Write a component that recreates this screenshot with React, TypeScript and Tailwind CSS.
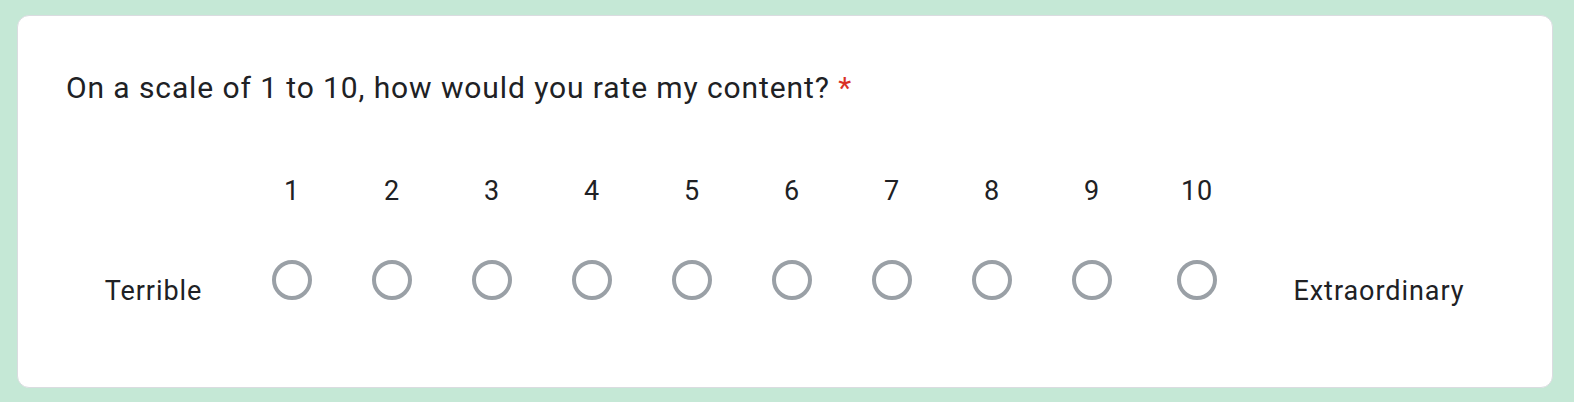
import React from "react";

export default function App() {
  const nums = [1, 2, 3, 4, 5, 6, 7, 8, 9, 10];
  return (
    <div
      className="w-[1574px] h-[402px] bg-[#c5e8d6] pt-[15px] pl-[17px]"
      style={{ fontFamily: "Roboto, 'Noto Sans', Arial, sans-serif" }}
    >
      <div className="w-[1536px] h-[373px] bg-white rounded-[12px] border border-[#dadce0] pt-[54px] pl-[48px] text-[#202124]">
        <div className="text-[30px] leading-[36px] tracking-[0.9px]">
          On a scale of 1 to 10, how would you rate my content?
          <span className="text-[#d93025]"> *</span>
        </div>
        <div className="flex items-end mt-[70px] text-[27px] leading-[30px] tracking-[0.95px]">
          <div className="w-[175px] text-center">Terrible</div>
          {nums.map((n) => (
            <div
              key={n}
              className={
                n === 10
                  ? "ml-[5px] w-[100px] flex flex-col items-center pb-[6px] pl-[2px]"
                  : "w-[100px] flex flex-col items-center pb-[6px] pl-[2px]"
              }
            >
              <div>{n}</div>
              <div className="mt-[54px] w-[40px] h-[40px] rounded-full border-[4px] border-[#9aa0a6]" />
            </div>
          ))}
          <div className="w-[266px] text-center">Extraordinary</div>
        </div>
      </div>
    </div>
  );
}
